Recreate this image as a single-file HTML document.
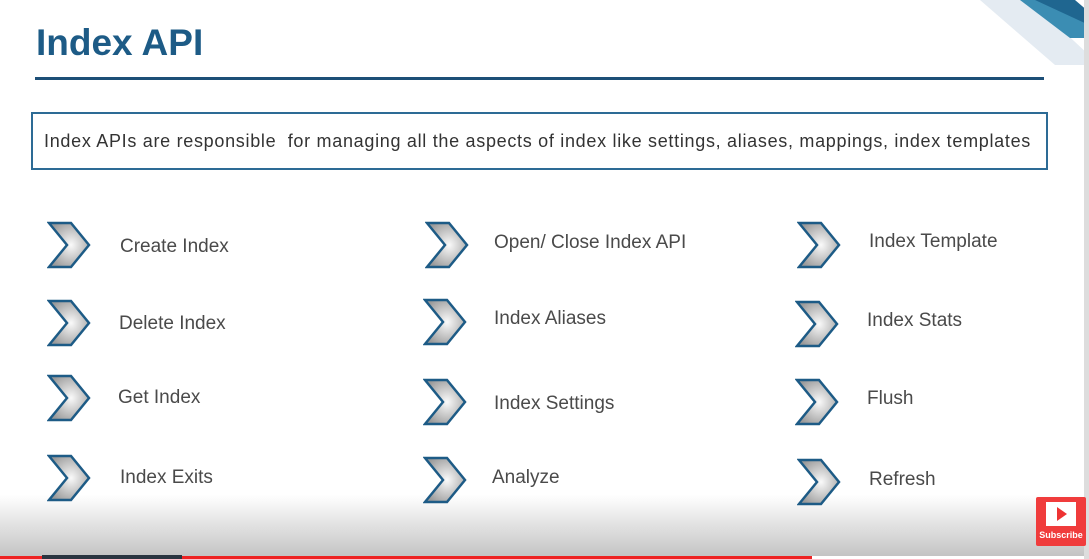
<!DOCTYPE html><html><head><style>
body{margin:0;width:1089px;height:559px;overflow:hidden;background:#fff;font-family:"Liberation Sans",sans-serif;position:relative}
.bg{position:absolute;left:0;top:495px;width:1089px;height:61px;background:linear-gradient(#fff,#c4c4c4)}
h1{position:absolute;left:36px;top:22px;margin:0;font-size:37px;color:#1d5b86;font-weight:bold}
.ln{position:absolute;left:35px;top:77px;width:1009px;height:3px;background:#1d4f77}
.box{position:absolute;left:31px;top:112px;width:1013px;height:54px;border:2px solid #2d6b95;font-size:18px;color:#333;line-height:54px;box-sizing:content-box;white-space:nowrap}
.box span{margin-left:11px;letter-spacing:.7px}
.t{position:absolute;font-size:19px;color:#4a4a4a;transform:translateY(-50%)}
svg.c{position:absolute;width:44px;height:48px}
</style></head><body>
<div class="bg"></div>
<svg style="position:absolute;left:960px;top:0" width="129" height="70"><polygon points="20,0 70,0 129,55 129,65 95,65" fill="#e4ebf2"/><polygon points="60,0 105,0 129,22 129,38 110,38" fill="#3b8db3"/><polygon points="75,0 115,0 129,12 129,25" fill="#1f6690"/></svg>
<div style="position:absolute;left:1084px;top:0;width:5px;height:559px;background:#ddd"></div>
<h1>Index API</h1><div class="ln"></div>
<div class="box"><span>Index APIs are responsible &nbsp;for managing all the aspects of index like settings, aliases, mappings, index templates</span></div>
<svg width="0" height="0"><defs><radialGradient id="g" cx="0.55" cy="0.5" r="0.6"><stop offset="0" stop-color="#fafafa"/><stop offset="1" stop-color="#9a9a9a"/></radialGradient><symbol id="ch" viewBox="0 0 44 48"><polygon points="2,2 24,2 42,24 24,46 2,46 20,24" fill="url(#g)" stroke="#1d5b86" stroke-width="2.5" stroke-linejoin="miter"/></symbol></defs></svg>
<svg class="c" style="left:47px;top:221px"><use href="#ch"/></svg>
<svg class="c" style="left:47px;top:299px"><use href="#ch"/></svg>
<svg class="c" style="left:47px;top:374px"><use href="#ch"/></svg>
<svg class="c" style="left:47px;top:454px"><use href="#ch"/></svg>
<svg class="c" style="left:425px;top:221px"><use href="#ch"/></svg>
<svg class="c" style="left:423px;top:298px"><use href="#ch"/></svg>
<svg class="c" style="left:423px;top:378px"><use href="#ch"/></svg>
<svg class="c" style="left:423px;top:456px"><use href="#ch"/></svg>
<svg class="c" style="left:797px;top:221px"><use href="#ch"/></svg>
<svg class="c" style="left:795px;top:300px"><use href="#ch"/></svg>
<svg class="c" style="left:795px;top:378px"><use href="#ch"/></svg>
<svg class="c" style="left:797px;top:458px"><use href="#ch"/></svg>
<div class="t" style="left:120px;top:247px">Create Index</div>
<div class="t" style="left:119px;top:324px">Delete Index</div>
<div class="t" style="left:118px;top:398px">Get Index</div>
<div class="t" style="left:120px;top:478px">Index Exits</div>
<div class="t" style="left:494px;top:243px">Open/ Close Index API</div>
<div class="t" style="left:494px;top:319px">Index Aliases</div>
<div class="t" style="left:494px;top:404px">Index Settings</div>
<div class="t" style="left:492px;top:478px">Analyze</div>
<div class="t" style="left:869px;top:242px">Index Template</div>
<div class="t" style="left:867px;top:321px">Index Stats</div>
<div class="t" style="left:867px;top:399px">Flush</div>
<div class="t" style="left:869px;top:480px">Refresh</div>
<div style="position:absolute;left:1036px;top:497px;width:50px;height:49px;background:#f03c3c;border-radius:2px"><div style="position:absolute;left:10px;top:5px;width:30px;height:24px;background:#fff"><div style="position:absolute;left:11px;top:5px;border-left:10px solid #e33;border-top:7px solid transparent;border-bottom:7px solid transparent"></div></div><div style="position:absolute;left:0;width:50px;top:33px;text-align:center;color:#fff;font-size:9px;font-weight:bold">Subscribe</div></div>
<div style="position:absolute;left:0;top:556px;width:812px;height:3px;background:#e22"></div>
<div style="position:absolute;left:42px;top:555px;width:140px;height:4px;background:#2a3540"></div>
</body></html>
